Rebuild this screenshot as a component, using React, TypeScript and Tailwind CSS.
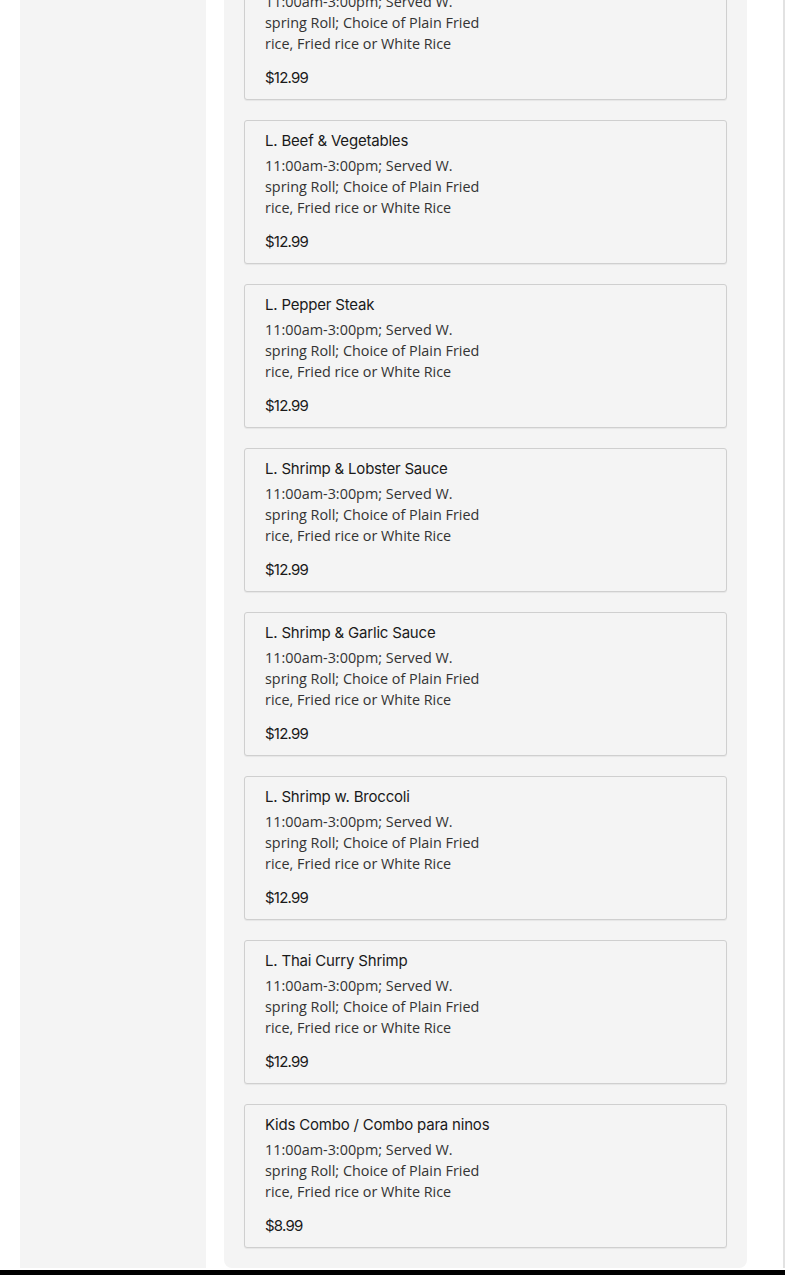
const items = [
  { name: 'L. Chicken w. Broccoli', price: '$12.99' },
  { name: 'L. Beef & Vegetables', price: '$12.99' },
  { name: 'L. Pepper Steak', price: '$12.99' },
  { name: 'L. Shrimp & Lobster Sauce', price: '$12.99' },
  { name: 'L. Shrimp & Garlic Sauce', price: '$12.99' },
  { name: 'L. Shrimp w. Broccoli', price: '$12.99' },
  { name: 'L. Thai Curry Shrimp', price: '$12.99' },
  { name: 'Kids Combo / Combo para ninos', price: '$8.99' },
];

const desc = '11:00am-3:00pm; Served W. spring Roll; Choice of Plain Fried rice, Fried rice or White Rice';

function MenuCard({ name, price }: { name: string; price: string }) {
  return (
    <div className="h-[144px] rounded-[3px] border border-[#cfcfcf] bg-[#f4f4f4] px-5 pt-[10px] shadow-[0_1px_1px_rgba(0,0,0,0.06)]">
      <h3 className="text-[15px] leading-5 font-normal text-[#1a1a1a] font-['Inter',sans-serif] tracking-[-0.2px]">
        {name}
      </h3>
      <p className="mt-[4px] w-[224px] text-[14.4px] leading-[21px] text-[#333] font-['Open_Sans',sans-serif]">
        {desc}
      </p>
      <p className="mt-[14px] text-[15px] leading-5 font-normal text-[#1a1a1a] font-['Inter',sans-serif] tracking-[-0.8px]">
        {price}
      </p>
    </div>
  );
}

export default function App() {
  return (
    <div className="h-[1275px] flex flex-col bg-white overflow-hidden">
      <div className="flex-1 flex pl-5 min-h-0">
        <aside className="w-[186px] h-[1268px] bg-[#f4f4f4]" />
        <main className="ml-[18px] w-[523px] h-[1268px] bg-[#f4f4f4] rounded-b-lg px-5 pb-5 overflow-hidden flex flex-col justify-end">
          <div className="flex flex-col gap-5">
            {items.map((it) => (
              <MenuCard key={it.name} name={it.name} price={it.price} />
            ))}
          </div>
        </main>
        <div className="flex-1" />
        <div className="w-[2px] h-[1268px] bg-[#e2e2e2]" />
      </div>
      <div className="h-[2px] bg-white" />
      <div className="h-[5px] bg-black" />
    </div>
  );
}
